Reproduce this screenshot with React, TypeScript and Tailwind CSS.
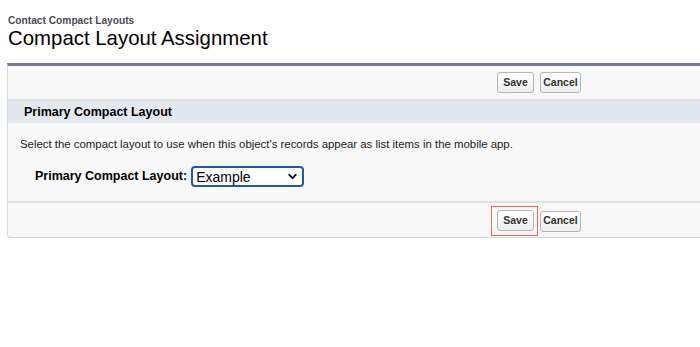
import { ChevronDown } from "lucide-react";

const Btn = ({ label, w }: { label: string; w: string }) => (
  <button className={`${w} h-[21px] rounded-[3px] border border-[#b5b5b5] bg-gradient-to-b from-white to-[#ededed] text-[10.5px] font-bold text-[#333] flex items-center justify-center`}>
    {label}
  </button>
);

export default function App() {
  return (
    <div className="w-[700px] h-[347px] bg-white overflow-hidden font-['Liberation_Sans',Arial,sans-serif] text-black">
      <div className="pt-[15px] pl-[8px]">
        <div className="text-[10.2px] leading-[11px] font-bold text-[#4a4a56]">Contact Compact Layouts</div>
        <h1 className="text-[20.4px] leading-[24px] text-black">Compact Layout Assignment</h1>
      </div>
      <div className="ml-[7px] mt-[13px] w-[700px] border-t-[3px] border-t-[#737a91] border-l border-l-[#dadada] border-b border-b-[#d8d8d8] rounded-bl-[4px] bg-[#f8f8f8]">
        <div className="h-[35px] flex items-center border-b-2 border-b-[#e0e0e0]">
          <div className="ml-[489px] flex gap-[6px]">
            <Btn label="Save" w="w-[37px]" />
            <Btn label="Cancel" w="w-[41px]" />
          </div>
        </div>
        <div className="h-[22px] bg-[#e3e8ef] flex items-center pl-[16px] text-[12.5px] font-bold text-black">
          Primary Compact Layout
        </div>
        <div className="h-[80px] border-b-2 border-b-[#e0e0e0]">
          <p className="pt-[14px] pl-[12px] text-[11.4px] leading-[14px] text-[#222]">
            Select the compact layout to use when this object's records appear as list items in the mobile app.
          </p>
          <div className="mt-[15px] pl-[27px] flex items-center gap-[4px]">
            <span className="text-[12.5px] font-bold text-black">Primary Compact Layout:</span>
            <div className="w-[113px] h-[21px] border-2 border-[#1b5aa6] rounded-[4px] bg-white flex items-center justify-between pl-[3px] pr-[3px]">
              <span className="text-[14px] leading-[16px]">Example</span>
              <ChevronDown className="w-[13px] h-[13px]" strokeWidth={3.5} />
            </div>
          </div>
        </div>
        <div className="h-[34px] pt-[3px]">
          <div className="ml-[483px] flex items-center gap-[2px]">
            <div className="flex border border-[#e8685c] pt-[3px] pb-[4px] pl-[5px] pr-[3px]">
              <Btn label="Save" w="w-[37px]" />
            </div>
            <Btn label="Cancel" w="w-[41px]" />
          </div>
        </div>
      </div>
    </div>
  );
}
